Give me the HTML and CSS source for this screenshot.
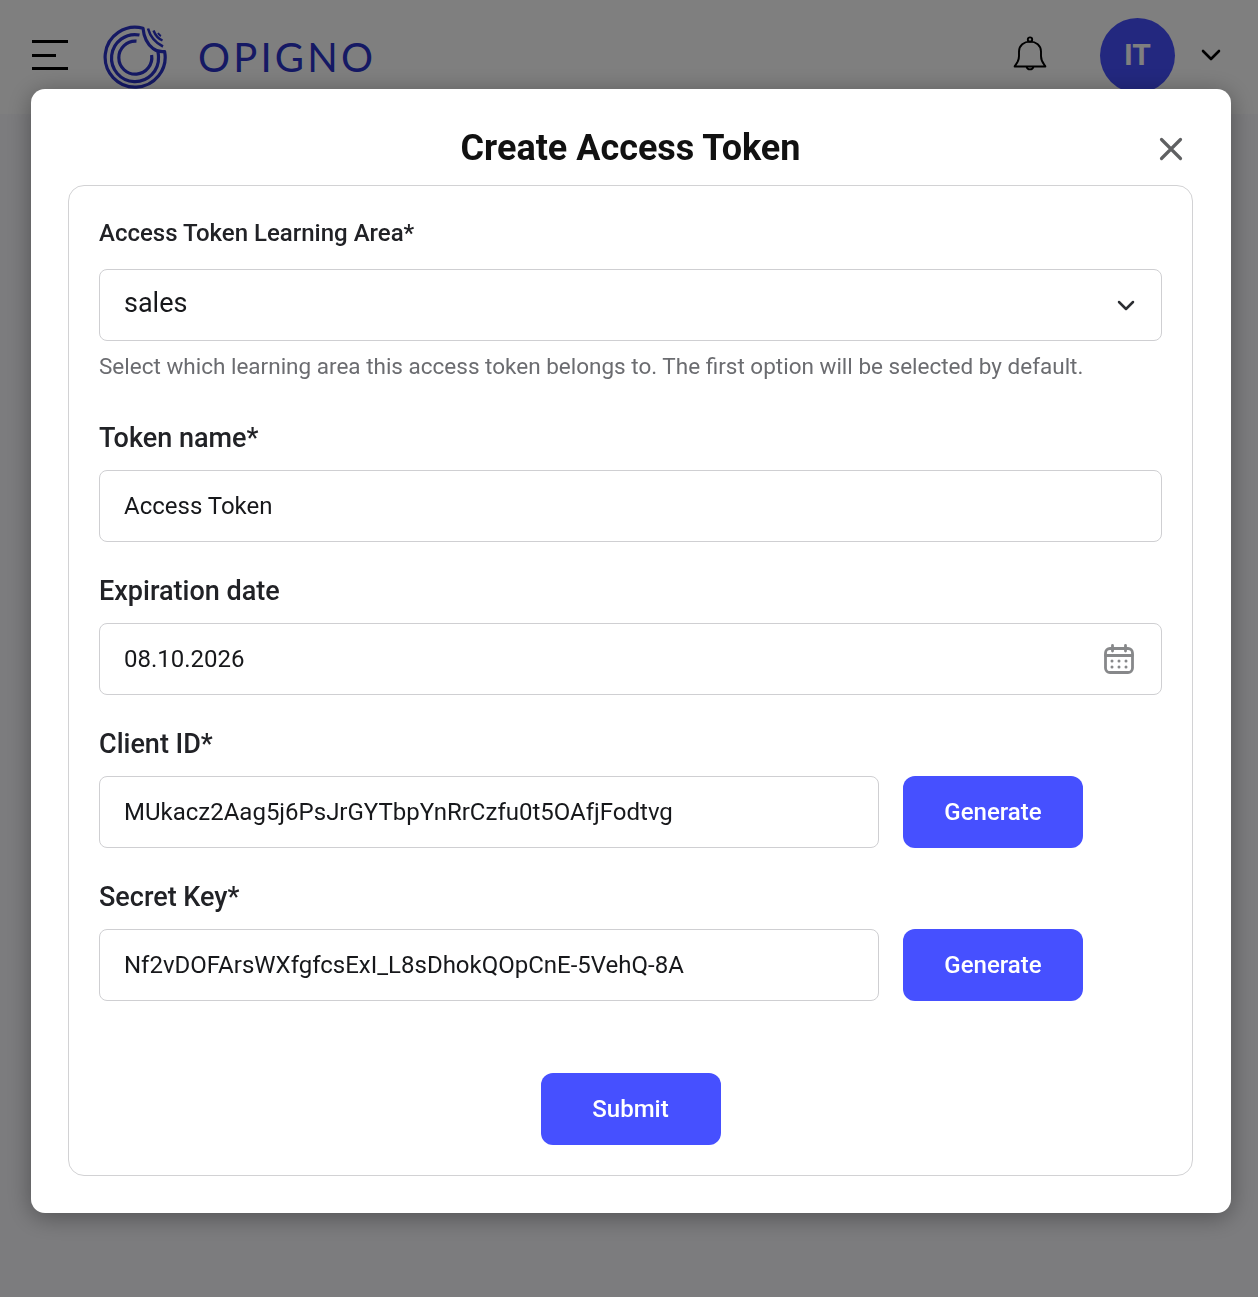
FILE: index.html
```html
<!DOCTYPE html>
<html lang="en">
<head>
<meta charset="utf-8">
<title>Create Access Token</title>
<link rel="stylesheet" href="styles.css">
</head>
<body>
<header class="topbar">
  <button class="burger" aria-label="Menu"><span class="b1"></span><span class="b2"></span><span class="b3"></span></button>
  <svg class="logo-mark" width="64" height="64" viewBox="0 0 64 64" fill="none" stroke="#2a32c8" stroke-width="3.2">
    <path d="M40 3.200 A30 30 0 1 0 61.600 26.500 C57 27 53 26 50 23.500 C46 20.500 41 14 40 3.200Z" stroke-linejoin="round"/>
    <path d="M36.500 10 A23.500 23.500 0 1 0 55.500 32 C55.500 30 55.300 28.800 55 27"/>
    <path d="M33.500 16.200 A16.500 16.500 0 1 0 48.600 30"/>
    <path d="M45 3.500 C47 11 51 17 60 21.500" stroke-width="2.600"/>
    <path d="M50.500 5.500 C52 9.500 55 13.500 59.500 15.500" stroke-width="2.400"/>
    <path d="M55 8 C56 9.500 57 10.500 58 11" stroke-width="2"/>
  </svg>
  <span class="wordmark">OPIGNO</span>
  <div class="spacer"></div>
  <svg class="bell" width="34" height="38" viewBox="0 0 34 38" fill="none" stroke="#000" stroke-width="1.900" stroke-linejoin="round">
    <circle cx="17" cy="3.600" r="2.200"/>
    <path d="M1.600 30.500 C1.600 29 6 27 6 20 V15.500 C6 9.500 11 5.600 17 5.600 C23 5.600 28 9.500 28 15.500 V20 C28 27 32.400 29 32.400 30.500 Z"/>
    <path d="M13.600 30.700 a3.500 3.500 0 0 0 6.800 0"/>
  </svg>
  <div class="avatar">IT</div>
  <svg class="caret" width="20" height="12" viewBox="0 0 20 12" fill="none" stroke="#000" stroke-width="2.600" stroke-linecap="round" stroke-linejoin="round"><path d="M2 2 L10 10 L18 2"/></svg>
</header>
<div class="overlay">
  <section class="modal">
    <div class="modal-head">
      <h1>Create Access Token</h1>
      <svg class="close" width="24" height="24" viewBox="0 0 24 24" fill="none" stroke="#5f6062" stroke-width="3.200" stroke-linecap="round"><path d="M2.500 2.500 L21.500 21.500 M21.500 2.500 L2.500 21.500"/></svg>
    </div>
    <form class="card">
      <div class="field first">
        <label class="label small">Access Token Learning Area*</label>
        <div class="control select"><span class="big">sales</span>
          <svg width="18" height="11" viewBox="0 0 18 11" fill="none" stroke="#2c2e33" stroke-width="2.500" stroke-linecap="round" stroke-linejoin="round"><path d="M2 2 L9 9 L16 2"/></svg>
        </div>
        <p class="hint">Select which learning area this access token belongs to. The first option will be selected by default.</p>
      </div>
      <div class="field">
        <label class="label">Token name*</label>
        <div class="control"><span>Access Token</span></div>
      </div>
      <div class="field">
        <label class="label">Expiration date</label>
        <div class="control date"><span>08.10.2026</span>
          <svg width="30" height="30" viewBox="0 0 30 30" fill="none" stroke="#87888a" stroke-width="2.800" stroke-linecap="round">
            <rect x="1.500" y="4.500" width="27" height="24" rx="4.500"/>
            <path d="M1.500 11.500 H28.500 M8.500 1.500 V7 M21.500 1.500 V7"/>
            <g fill="#87888a" stroke="none"><circle cx="8" cy="17" r="1.500"/><circle cx="15" cy="17" r="1.500"/><circle cx="22" cy="17" r="1.500"/><circle cx="8" cy="23" r="1.500"/><circle cx="15" cy="23" r="1.500"/><circle cx="22" cy="23" r="1.500"/></g>
          </svg>
        </div>
      </div>
      <div class="field">
        <label class="label">Client ID*</label>
        <div class="row">
          <div class="control grow"><span>MUkacz2Aag5j6PsJrGYTbpYnRrCzfu0t5OAfjFodtvg</span></div>
          <button type="button" class="btn">Generate</button>
        </div>
      </div>
      <div class="field">
        <label class="label">Secret Key*</label>
        <div class="row">
          <div class="control grow"><span>Nf2vDOFArsWXfgfcsExI_L8sDhokQOpCnE-5VehQ-8A</span></div>
          <button type="button" class="btn">Generate</button>
        </div>
      </div>
      <div class="actions"><button type="button" class="btn">Submit</button></div>
    </form>
  </section>
</div>
</body>
</html>
```
FILE: styles.css
```css
* { box-sizing: border-box; }
html, body { margin: 0; height: 1297px; }
body { background: #f8f8fc; font-family: Roboto, sans-serif; color: #1f2023; overflow: hidden; }
.topbar { height: 114px; background: #fff; display: flex; align-items: center; padding: 0 37px 4px 32px; }
.burger { width: 37px; height: 30px; padding: 0; border: 0; background: none; display: flex; flex-direction: column; justify-content: space-between; align-items: flex-start; margin-right: 35px; }
.burger span { display: block; height: 3px; background: #000; width: 36px; }
.burger .b2 { width: 24px; }
.logo-mark { flex: none; margin: 4px 31px 0 -1px; }
.wordmark { font-family: "Lato", sans-serif; font-size: 40px; font-weight: 400; color: #2a32c8; letter-spacing: 3.2px; line-height: 1; margin-top: 4px; }
.spacer { flex: 1; }
.bell { flex: none; margin-right: 53px; }
.avatar { width: 75px; height: 75px; border-radius: 50%; background: #4650ff; color: #fff; font-size: 30px; font-weight: 700; display: flex; align-items: center; justify-content: center; margin-right: 26px; padding-bottom: 1px; }
.caret { flex: none; }
.overlay { position: fixed; inset: 0; background: rgba(0,0,0,.5); padding: 89px 27px 0 31px; }
.modal { width: 1200px; height: 1124px; background: #fff; border-radius: 14px; padding: 0 38px 37px 37px; display: flex; flex-direction: column; box-shadow: 0 4px 24px rgba(0,0,0,.35); }
.modal-head { height: 96px; padding-top: 22px; display: flex; align-items: center; justify-content: center; position: relative; }
.modal-head h1 { margin: 0; font-size: 36px; font-weight: 700; color: #111; line-height: 1; }
.close { position: absolute; right: 10px; top: 48px; }
.card { flex: 1; border: 1px solid #d2d2d4; border-radius: 16px; padding: 30px; display: flex; flex-direction: column; }
.field { margin-top: 33px; }
.field.first { margin-top: 0; }
.label { display: block; font-size: 27px; font-weight: 500; line-height: 32px; color: #212226; margin-bottom: 16px; }
.label.small { font-size: 24px; line-height: 34px; margin-bottom: 19px; }
.control { height: 72px; border: 1px solid #cfcfd2; border-radius: 8px; display: flex; align-items: center; justify-content: space-between; padding: 0 26px 0 24px; font-size: 24px; color: #17181b; background: #fff; }
.control .big { font-size: 27px; padding-bottom: 4px; }
.date { padding-right: 27px; }
.hint { margin: 11px 0 9px; font-size: 22.5px; line-height: 28px; color: #6b6c70; }
.row { display: flex; gap: 24px; padding-right: 79px; }
.grow { flex: 1; min-width: 0; }
.btn { width: 180px; height: 72px; flex: none; border: 0; border-radius: 12px; background: #4650ff; color: #fff; font-family: Roboto, sans-serif; font-size: 24px; font-weight: 500; }
.actions { margin-top: 72px; display: flex; justify-content: center; }
```
